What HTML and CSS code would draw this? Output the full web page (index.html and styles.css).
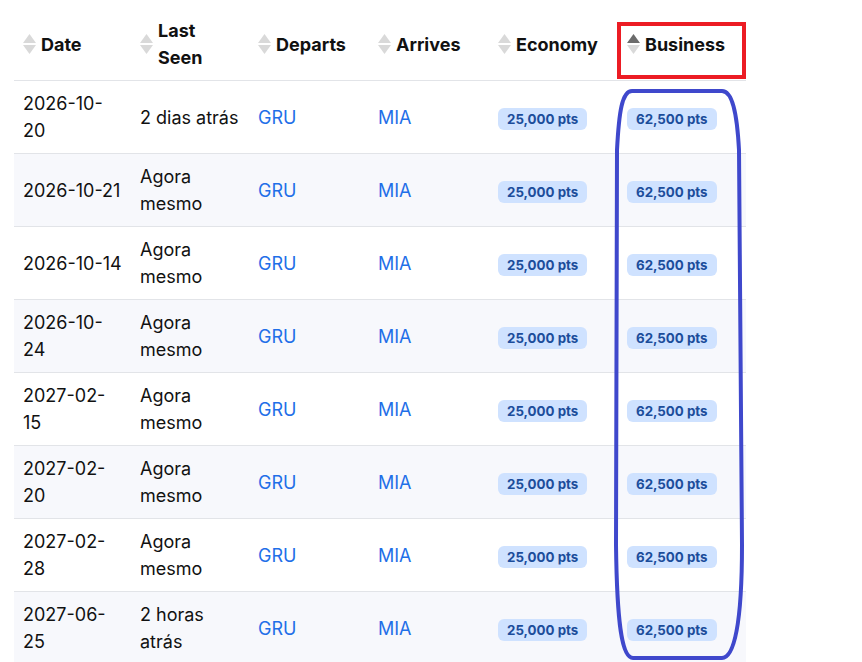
FILE: index.html
```html
<!DOCTYPE html>
<html lang="pt">
<head>
<meta charset="utf-8">
<title>Flights</title>
<link rel="stylesheet" href="styles.css">
</head>
<body>
<div class="page">
  <table class="flights">
    <colgroup>
      <col class="c-date"><col class="c-seen"><col class="c-dep"><col class="c-arr"><col class="c-eco"><col class="c-bus">
    </colgroup>
    <thead>
      <tr>
        <th><div class="th-in"><svg class="sort" viewBox="0 0 13 20"><polygon class="up" points="6.5,0 13,9 0,9"/><polygon class="down" points="0,11 13,11 6.5,20"/></svg><span>Date</span></div></th>
        <th><div class="th-in"><svg class="sort" viewBox="0 0 13 20"><polygon class="up" points="6.5,0 13,9 0,9"/><polygon class="down" points="0,11 13,11 6.5,20"/></svg><span>Last Seen</span></div></th>
        <th><div class="th-in"><svg class="sort" viewBox="0 0 13 20"><polygon class="up" points="6.5,0 13,9 0,9"/><polygon class="down" points="0,11 13,11 6.5,20"/></svg><span>Departs</span></div></th>
        <th><div class="th-in"><svg class="sort" viewBox="0 0 13 20"><polygon class="up" points="6.5,0 13,9 0,9"/><polygon class="down" points="0,11 13,11 6.5,20"/></svg><span>Arrives</span></div></th>
        <th><div class="th-in"><svg class="sort" viewBox="0 0 13 20"><polygon class="up" points="6.5,0 13,9 0,9"/><polygon class="down" points="0,11 13,11 6.5,20"/></svg><span>Economy</span></div></th>
        <th><div class="th-in"><svg class="sort active" viewBox="0 0 13 20"><polygon class="up" points="6.5,0 13,9 0,9"/><polygon class="down" points="0,11 13,11 6.5,20"/></svg><span>Business</span></div></th>
      </tr>
    </thead>
    <tbody>
      <tr><td>2026-10-20</td><td>2 dias atrás</td><td><a href="#">GRU</a></td><td><a href="#">MIA</a></td><td><span class="badge">25,000 pts</span></td><td><span class="badge">62,500 pts</span></td></tr>
      <tr><td>2026-10-21</td><td>Agora mesmo</td><td><a href="#">GRU</a></td><td><a href="#">MIA</a></td><td><span class="badge">25,000 pts</span></td><td><span class="badge">62,500 pts</span></td></tr>
      <tr><td>2026-10-14</td><td>Agora mesmo</td><td><a href="#">GRU</a></td><td><a href="#">MIA</a></td><td><span class="badge">25,000 pts</span></td><td><span class="badge">62,500 pts</span></td></tr>
      <tr><td>2026-10-24</td><td>Agora mesmo</td><td><a href="#">GRU</a></td><td><a href="#">MIA</a></td><td><span class="badge">25,000 pts</span></td><td><span class="badge">62,500 pts</span></td></tr>
      <tr><td>2027-02-15</td><td>Agora mesmo</td><td><a href="#">GRU</a></td><td><a href="#">MIA</a></td><td><span class="badge">25,000 pts</span></td><td><span class="badge">62,500 pts</span></td></tr>
      <tr><td>2027-02-20</td><td>Agora mesmo</td><td><a href="#">GRU</a></td><td><a href="#">MIA</a></td><td><span class="badge">25,000 pts</span></td><td><span class="badge">62,500 pts</span></td></tr>
      <tr><td>2027-02-28</td><td>Agora mesmo</td><td><a href="#">GRU</a></td><td><a href="#">MIA</a></td><td><span class="badge">25,000 pts</span></td><td><span class="badge">62,500 pts</span></td></tr>
      <tr><td>2027-06-25</td><td>2 horas atrás</td><td><a href="#">GRU</a></td><td><a href="#">MIA</a></td><td><span class="badge">25,000 pts</span></td><td><span class="badge">62,500 pts</span></td></tr>
    </tbody>
  </table>
  <svg class="annot" viewBox="0 0 862 662" width="862" height="662">
    <rect class="annot-red" x="619" y="24" width="125" height="53"/>
    <path class="annot-blue" d="M 632 91 L 722 91 C 732 91 737 112 739 150 L 742 545 C 742 625 734 658 722 658 L 633 658 C 622 658 617 625 616 545 L 617 150 C 619 112 622 91 632 91 Z"/>
  </svg>
</div>
</body>
</html>
```
FILE: styles.css
```css
html, body {
  margin: 0;
  padding: 0;
  background: #ffffff;
}

.page {
  position: relative;
  padding: 0 14px;
  font-family: Inter, "Noto Sans", sans-serif;
  color: #111111;
}

.flights {
  width: 732px;
  border-collapse: collapse;
  table-layout: fixed;
  font-size: 18px;
  line-height: 27px;
}

.c-date { width: 117px; }
.c-seen { width: 118px; }
.c-dep { width: 120px; }
.c-arr { width: 120px; }
.c-eco { width: 129px; }
.c-bus { width: 128px; }

.flights th {
  padding: 17px 8px 9px 9px;
  text-align: left;
  font-weight: 700;
  border-bottom: 1px solid #e2e4e8;
}

.th-in {
  display: flex;
  align-items: center;
  gap: 5px;
}

.sort {
  flex: none;
  width: 13px;
  height: 20px;
}

.sort polygon { fill: #d9d9d9; }
.sort.active .up { fill: #6b6b6b; }

.flights td {
  padding: 9px 8px 9px 9px;
  border-bottom: 1px solid #e2e4e8;
  vertical-align: middle;
}

.flights tbody tr:nth-child(even) td {
  background: #f7f8fc;
}

.flights a {
  color: #1f6fe8;
  text-decoration: none;
}

.badge {
  display: inline-block;
  background: #cfe2ff;
  color: #1c4d9b;
  font-weight: 700;
  font-size: 13.3px;
  line-height: 16px;
  padding: 3px 9px;
  border-radius: 6px;
}

.annot {
  position: absolute;
  left: 0;
  top: 0;
  pointer-events: none;
}

.annot-red {
  fill: none;
  stroke: #ec1c24;
  stroke-width: 4;
}

.annot-blue {
  fill: none;
  stroke: #3f48cc;
  stroke-width: 4;
}
```
